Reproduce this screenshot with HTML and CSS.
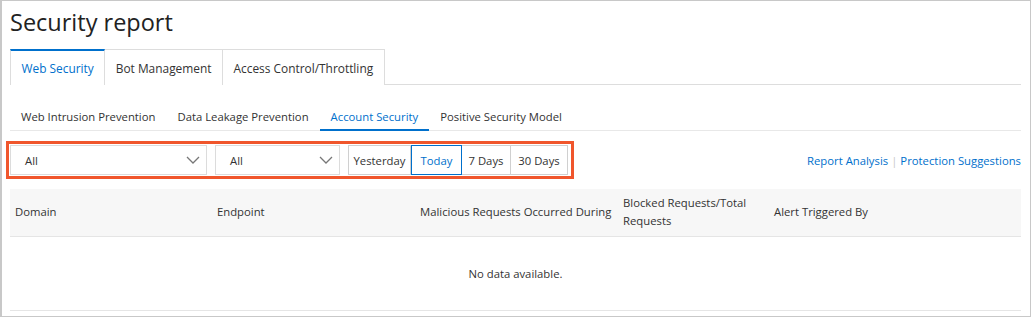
FILE: index.html
```html
<!DOCTYPE html>
<html lang="en">
<head>
  <meta charset="UTF-8">
  <title>Security report</title>
  <link rel="stylesheet" href="styles.css">
</head>
<body>
  <div class="frame">
    <h1 class="page-title">Security report</h1>

    <!-- Main tabs -->
    <div class="tabs">
      <a class="tab active">Web Security</a>
      <a class="tab">Bot Management</a>
      <a class="tab">Access Control/Throttling</a>
    </div>

    <!-- Sub tabs -->
    <div class="subtabs">
      <a class="subtab">Web Intrusion Prevention</a>
      <a class="subtab">Data Leakage Prevention</a>
      <a class="subtab active">Account Security</a>
      <a class="subtab">Positive Security Model</a>
    </div>

    <!-- Filters -->
    <div class="toolbar">
      <div class="highlight">
        <div class="select select-wide">
          <span>All</span>
          <svg class="chevron" width="14" height="8" viewBox="0 0 14 8"><path d="M1 1l6 6 6-6" fill="none" stroke="#777" stroke-width="1.3"/></svg>
        </div>
        <div class="select select-narrow">
          <span>All</span>
          <svg class="chevron" width="14" height="8" viewBox="0 0 14 8"><path d="M1 1l6 6 6-6" fill="none" stroke="#777" stroke-width="1.3"/></svg>
        </div>
        <div class="btn-group">
          <button class="btn btn-yesterday">Yesterday</button>
          <button class="btn btn-today active">Today</button>
          <button class="btn btn-7">7 Days</button>
          <button class="btn btn-30">30 Days</button>
        </div>
      </div>
      <div class="links">
        <a class="link">Report Analysis</a>
        <span class="sep">|</span>
        <a class="link">Protection Suggestions</a>
      </div>
    </div>

    <!-- Table -->
    <table class="data-table">
      <thead>
        <tr>
          <th class="col-domain">Domain</th>
          <th class="col-endpoint">Endpoint</th>
          <th class="col-malicious">Malicious Requests Occurred During</th>
          <th class="col-blocked">Blocked Requests/Total Requests</th>
          <th>Alert Triggered By</th>
        </tr>
      </thead>
      <tbody>
        <tr>
          <td colspan="5" class="empty">No data available.</td>
        </tr>
      </tbody>
    </table>
  </div>
</body>
</html>
```

FILE: styles.css
```css
* {
  margin: 0;
  padding: 0;
  box-sizing: border-box;
}

body {
  font-family: 'Open Sans', 'Liberation Sans', sans-serif;
  font-size: 11.3px;
  color: #333;
  background: #fff;
}

.frame {
  width: 1031px;
  height: 317px;
  border: 1px solid #c8c8c8;
  border-left-width: 2px;
  padding: 0 9px 0 8px;
  overflow: hidden;
}

.page-title {
  font-size: 23.5px;
  font-weight: 400;
  color: #222;
  line-height: 32px;
  padding-top: 5px;
  height: 48px;
}

/* Main tabs */
.tabs {
  display: flex;
  border-bottom: 1px solid #ddd;
  height: 36px;
}

.tab {
  display: flex;
  align-items: center;
  height: 36px;
  padding: 0 10.5px;
  border: 1px solid #ddd;
  border-left: none;
  border-bottom: none;
  font-size: 11.9px;
  color: #333;
  background: #fff;
}

.tab:first-child {
  border-left: 1px solid #ddd;
}

.tab.active {
  border-top: 2px solid #0070cc;
  color: #0070cc;
  margin-bottom: -1px;
}

/* Sub tabs */
.subtabs {
  display: flex;
  margin-top: 15px;
  height: 31px;
  border-bottom: 1px solid #e8e8e8;
}

.subtab {
  display: block;
  padding: 8px 11px 0;
  line-height: 17px;
  color: #333;
  height: 31px;
}

.subtab.active {
  color: #0070cc;
  border-bottom: 2px solid #0070cc;
}

/* Toolbar */
.toolbar {
  display: flex;
  justify-content: space-between;
  align-items: center;
  margin-top: 10px;
}

.highlight {
  display: flex;
  gap: 8px;
  border: 3px solid #f0562c;
  padding: 1px 3px 1px 1px;
  margin-left: -4px;
}

.select {
  display: flex;
  align-items: center;
  justify-content: space-between;
  height: 30px;
  border: 1px solid #dcdcdc;
  padding: 0 6px 0 14px;
}

.select-wide {
  width: 197px;
}

.select-narrow {
  width: 125px;
}

.btn-group {
  display: flex;
}

.btn {
  height: 30px;
  border: 1px solid #d0d0d0;
  border-left: none;
  background: #fff;
  font-family: inherit;
  font-size: 11.3px;
  color: #333;
}

.btn:first-child {
  border-left: 1px solid #d0d0d0;
}

.btn.active {
  border: 1px solid #0070cc;
  color: #0070cc;
}

.btn-yesterday { width: 63px; }
.btn-today { width: 51px; }
.btn-7 { width: 49px; }
.btn-30 { width: 57px; }

.links {
  display: flex;
  align-items: center;
  gap: 3px;
}

.link {
  color: #0070cc;
}

.sep {
  color: #c8c8c8;
}

/* Table */
.data-table {
  width: 100%;
  margin-top: 10px;
  border-collapse: collapse;
  table-layout: fixed;
}

.data-table th {
  background: #f7f7f7;
  font-weight: 400;
  text-align: left;
  color: #333;
  height: 47px;
  padding: 0 5px;
  line-height: 18px;
  border-bottom: 1px solid #e5e5e5;
}

.col-domain { width: 202px; }
.col-endpoint { width: 203px; }
.col-malicious { width: 203px; white-space: nowrap; }
.col-blocked { width: 151px; }

.empty {
  text-align: center;
  height: 74px;
  border-bottom: 1px solid #e5e5e5;
  color: #333;
}
```
